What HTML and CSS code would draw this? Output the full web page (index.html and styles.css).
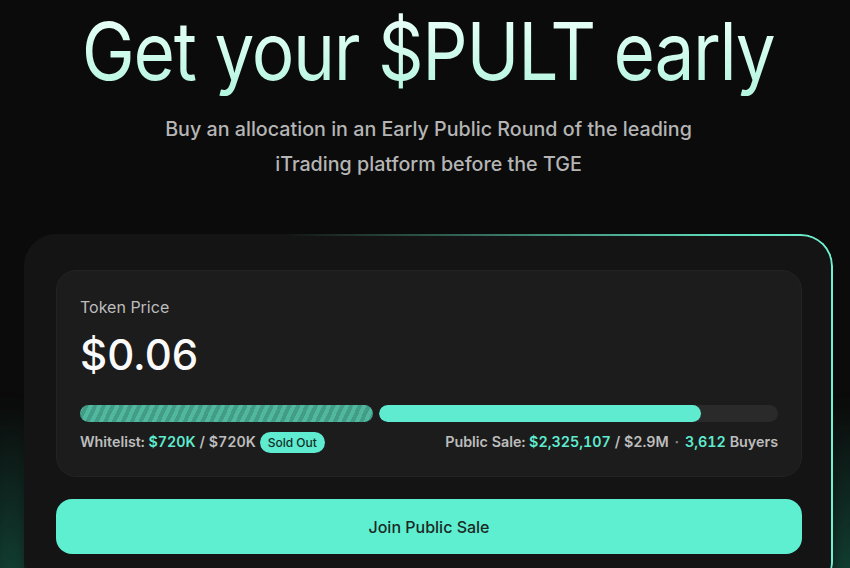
FILE: index.html
```html
<!DOCTYPE html>
<html lang="en">
<head>
  <meta charset="UTF-8" />
  <meta name="viewport" content="width=device-width, initial-scale=1.0"/>
  <title>Get your $PULT early</title>
  <link rel="stylesheet" href="styles.css">
</head>
<body>

<div class="glow glow-left"></div>
<div class="glow glow-right"></div>

<div class="page">
  <h1 class="title">Get your $PULT early</h1>
  <p class="subtitle">Buy an allocation in an Early Public Round of the leading<br>iTrading platform before the TGE</p>

  <div class="card">
    <div class="price-box">
      <div class="label">Token Price</div>
      <div class="price">$0.06</div>

      <div class="bars">
        <div class="bar bar-whitelist"></div>
        <div class="bar bar-public">
          <div class="bar-fill" style="width: 80.7%;"></div>
        </div>
      </div>

      <div class="stats">
        <div class="stat">
          Whitelist: <span class="hl">$720K</span> / $720K <span class="pill">Sold Out</span>
        </div>
        <div class="stat">
          Public Sale: <span class="hl">$2,325,107</span> / $2.9M <span class="dot">&middot;</span> <span class="hl">3,612</span> Buyers
        </div>
      </div>
    </div>

    <button class="join-btn">Join Public Sale</button>
  </div>
</div>

</body>
</html>
```

FILE: styles.css
```css
body {
  margin: 0;
  background-color: #0b0b0b;
  font-family: 'Inter', 'Noto Sans', sans-serif;
  color: #fff;
  height: 568px;
  overflow: hidden;
  position: relative;
}

.glow {
  position: absolute;
  top: 400px;
  width: 40px;
  height: 200px;
  background: linear-gradient(180deg, rgba(20, 90, 70, 0) 0%, rgba(24, 110, 86, 0.6) 100%);
  filter: blur(8px);
}

.glow-left {
  left: -10px;
}

.glow-right {
  right: -20px;
}

.page {
  position: relative;
  width: 809px;
  margin-left: 24px;
  display: flex;
  flex-direction: column;
  align-items: center;
}

.title {
  margin: 0;
  padding-top: 6px;
  font-size: 80px;
  font-weight: 400;
  line-height: 90px;
  letter-spacing: -1.5px;
  white-space: nowrap;
  transform: scaleX(0.89);
  background: linear-gradient(180deg, #e6fff7 20%, #b3f5df 100%);
  -webkit-background-clip: text;
  background-clip: text;
  color: transparent;
}

.subtitle {
  margin: 16px 0 0;
  font-size: 19.7px;
  font-weight: 500;
  line-height: 35px;
  color: #b5b5b5;
  text-align: center;
}

.card {
  box-sizing: border-box;
  width: 809px;
  margin-top: 52px;
  padding: 36px 31px 40px 32px;
  background: #141414;
  border-radius: 32px;
  position: relative;
}

.card::before {
  content: "";
  position: absolute;
  inset: 0;
  border-radius: 32px;
  padding: 2px;
  background: linear-gradient(90deg, rgba(94, 234, 205, 0) 32%, #5ed8b6 85%, #6ff0cf 100%);
  -webkit-mask: linear-gradient(#000 0 0) content-box, linear-gradient(#000 0 0);
  -webkit-mask-composite: xor;
  mask-composite: exclude;
  pointer-events: none;
}

.price-box {
  background: #1c1c1c;
  border: 1px solid #232323;
  border-radius: 20px;
  padding: 25px 23px 23px;
}

.label {
  font-size: 16px;
  color: #bdbdbd;
  line-height: 22px;
}

.price {
  margin-top: 12px;
  font-size: 42px;
  font-weight: 500;
  line-height: 50px;
  color: #fafafa;
}

.bars {
  display: flex;
  gap: 6px;
  margin-top: 25px;
}

.bar {
  height: 17px;
  border-radius: 9px;
}

.bar-whitelist {
  width: 293px;
  background: repeating-linear-gradient(115deg, #4fb89f 0 4px, #429c86 4px 8px);
}

.bar-public {
  flex: 1;
  background: #2a2a2a;
  overflow: hidden;
}

.bar-fill {
  height: 100%;
  background: #5eebcf;
  border-radius: 9px;
}

.stats {
  display: flex;
  justify-content: space-between;
  align-items: center;
  margin-top: 9px;
  font-size: 14.3px;
  font-weight: 600;
  color: #bdbdbd;
  line-height: 22px;
  font-variant-numeric: tabular-nums;
}

.hl {
  color: #5eebcf;
}

.pill {
  display: inline-block;
  background: #5eebcf;
  color: #133028;
  font-size: 12px;
  font-weight: 500;
  padding: 3px 8px;
  border-radius: 11px;
  line-height: 15px;
}

.dot {
  margin: 0 2px;
  color: #8a8a8a;
}

.join-btn {
  display: block;
  width: 100%;
  height: 55px;
  margin-top: 22px;
  border: none;
  border-radius: 16px;
  background: #5eefd0;
  color: #1b2a25;
  font-family: 'Inter', sans-serif;
  font-size: 16px;
  font-weight: 500;
  cursor: pointer;
}
```
